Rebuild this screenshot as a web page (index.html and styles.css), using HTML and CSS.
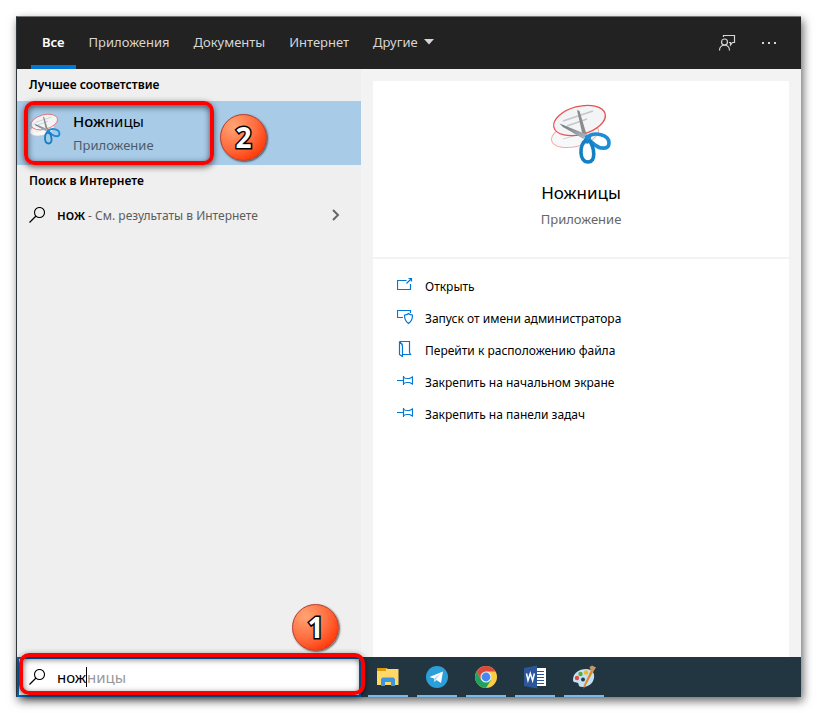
FILE: index.html
```
<!DOCTYPE html>
<html lang="ru">

	<head>
		<meta charset="UTF-8">
		<title>Поиск</title>
		<link rel="stylesheet" href="styles.css">
	</head>

	<body>
		<svg class="defs" width="0" height="0" aria-hidden="true">
			<defs>
				<linearGradient id="blade" x1="0" y1="0" x2="1" y2="1">
					<stop offset="0" stop-color="#6d7277"/>
					<stop offset="1" stop-color="#b4b9c4"/>
				</linearGradient>
			</defs>
			<symbol id="scissors" viewBox="0 0 62 62">
				<ellipse cx="25" cy="32" rx="24" ry="11.500" transform="rotate(-14 25 32)" fill="#f7f8fa" stroke="#f4a9a9"/>
				<path d="M13 36l14-4" stroke="#d3d3d3" stroke-width="1.200"/>
				<ellipse cx="29.500" cy="17.500" rx="26.500" ry="14" transform="rotate(-15 29.500 17.500)" fill="#f3f4f6" stroke="#ea5252" stroke-width="1.300"/>
				<path d="M13 18l30-10M17 23l20-7" stroke="#c4c6c8" stroke-width="1.500"/>
				<path d="M27 7l2.500 1L37 33l-4 1z" fill="#8b8b8b"/>
				<path d="M9.500 20.500L37 31.500 33.500 36 13 24z" fill="url(#blade)"/>
				<path d="M34 36l3-4h5l-2 5-2 4-4-2z" fill="#1786cc"/>
				<path d="M37 34C45 28 59 32 59 40c0 7-9 6-14 2-4-3-6-5-8-8z" fill="none" stroke="#1b8ed6" stroke-width="3.600"/>
				<path d="M36 37c-7 5-7 22 2 22 8 0 7-14 1-22" fill="none" stroke="#1480c4" stroke-width="3.600"/>
			</symbol>
			<symbol id="loupe" viewBox="0 0 16 16">
				<circle cx="10.500" cy="5.500" r="5" fill="none" stroke="currentColor" stroke-width="1.100"/>
				<path d="M7 9L.5 15.500" stroke="currentColor" stroke-width="1.200"/>
			</symbol>
			<symbol id="pin" viewBox="0 0 16 16">
				<path d="M0 7.500h6.500M6.500 3v9M6.500 4c1 1.500 2 1.500 3.500 1.500h2.500l3-1.500v7l-3-1.500H10c-1.500 0-2.500 0-3.500 1.500" fill="none" stroke="currentColor" stroke-width="1.200"/>
			</symbol>
		</svg>

		<div class="window">
			<header class="top">
				<nav class="tabs">
					<button class="tab active" type="button">Все</button>
					<button class="tab" type="button">Приложения</button>
					<button class="tab" type="button">Документы</button>
					<button class="tab" type="button">Интернет</button>
					<button class="tab" type="button">Другие
						<svg width="10" height="6" viewBox="0 0 10 6"><path d="M0 0h10L5 5.500z" fill="currentColor"/></svg>
					</button>
				</nav>
				<button class="tool" type="button" aria-label="Отзыв">
					<svg width="18" height="18" viewBox="0 0 18 18" fill="none" stroke="currentColor" stroke-width="1.200">
						<circle cx="6.500" cy="8" r="3"/>
						<path d="M1.500 16.500c0-7 10-7 10 0M5.500 3V1.500h11v7h-2l-2 2.500V8.500h-1.500"/>
					</svg>
				</button>
				<button class="tool" type="button" aria-label="Параметры">
					<svg width="18" height="18" viewBox="0 0 18 18" fill="currentColor"><path d="M2 8h2v2H2zM8 8h2v2H8zM14 8h2v2h-2z"/></svg>
				</button>
			</header>

			<main class="content">
				<section class="results">
					<h2>Лучшее соответствие</h2>
					<a class="best" href="#">
						<svg width="32" height="32"><use href="#scissors"/></svg>
						<span class="best-text">
							<span class="best-name"><b>Нож</b>ницы</span>
							<span class="kind">Приложение</span>
						</span>
						<span class="frame frame-best"></span>
						<span class="step step-two">2</span>
					</a>
					<h2>Поиск в Интернете</h2>
					<a class="web" href="#">
						<svg width="16" height="16"><use href="#loupe"/></svg>
						<span class="web-text"><b>нож</b> - См. результаты в Интернете</span>
						<svg width="8" height="12" viewBox="0 0 8 12"><path d="M1 1l5 5-5 5" fill="none" stroke="#666" stroke-width="2"/></svg>
					</a>
				</section>

				<section class="preview">
					<div class="card">
						<svg width="62" height="62"><use href="#scissors"/></svg>
						<h1>Ножницы</h1>
						<p>Приложение</p>
					</div>
					<ul class="actions">
						<li><a href="#">
							<svg width="16" height="16" viewBox="0 0 16 16"><path d="M9.500 3.500H.5v9h13V7M9.500 6.500l5-5M11.500 1.500h3v3" fill="none" stroke="currentColor" stroke-width="1.200"/></svg>
							Открыть</a></li>
						<li><a href="#">
							<svg width="16" height="16" viewBox="0 0 16 16"><path d="M6 8.500H.5v-7h13V4M11.500 4.500c1 1 2.500 1.500 4 1.500 0 4-1 6.500-4 8.500-3-2-4-4.500-4-8.500 1.500 0 3-.5 4-1.500z" fill="none" stroke="currentColor" stroke-width="1.200"/></svg>
							Запуск от имени администратора</a></li>
						<li><a href="#">
							<svg width="16" height="16" viewBox="0 0 16 16"><path d="M2.500.5h10v11l1 2h-8M2.500.5v13l3 2V5.500c0-2-1-3.500-3-5" fill="none" stroke="currentColor" stroke-width="1.200"/></svg>
							Перейти к расположению файла</a></li>
						<li><a href="#">
							<svg width="16" height="16"><use href="#pin"/></svg>
							Закрепить на начальном экране</a></li>
						<li><a href="#">
							<svg width="16" height="16"><use href="#pin"/></svg>
							Закрепить на панели задач</a></li>
					</ul>
				</section>
			</main>

			<footer class="taskbar">
				<div class="search">
					<label class="search-box">
						<svg width="16" height="16"><use href="#loupe"/></svg>
						<input type="text" value="нож" aria-label="Поиск">
						<span class="hint">ницы</span>
					</label>
					<span class="frame frame-search"></span>
					<span class="step step-one">1</span>
				</div>
				<div class="apps">
					<button class="app" type="button" aria-label="Проводник">
						<svg width="24" height="24" viewBox="0 0 24 24">
							<path d="M1 3h9l2 1h10.500v16H1z" fill="#ffd868"/>
							<path d="M1 3h9v3H1z" fill="#dd9b08"/>
							<path d="M5 21v-7l1.500-1.500h11L19 14v7h-4v-4H9v4z" fill="#3a96dd"/>
						</svg>
					</button>
					<button class="app" type="button" aria-label="Telegram">
						<svg width="24" height="24" viewBox="0 0 24 24">
							<circle cx="12" cy="12" r="11" fill="#2a9fda"/>
							<path d="M4.500 12L18 6.500l-2 11.500-4.500-3-2 2L9 13.500z" fill="#fff"/>
							<path d="M9 13.500l6.500-5-4.500 6-1.500 2.500z" fill="#b7d8ec"/>
						</svg>
					</button>
					<button class="app" type="button" aria-label="Chrome">
						<svg width="24" height="24" viewBox="0 0 24 24">
							<circle cx="12" cy="12" r="11" fill="#ffcd40"/>
							<path d="M2.500 6.500A11 11 0 0 1 21.500 6.500H12L7 14.500z" fill="#dc4a3d"/>
							<path d="M2.500 6.500A11 11 0 0 0 12 23l5-8-10-.5z" fill="#1da261"/>
							<circle cx="12" cy="12" r="5.500" fill="#f1f1f1"/>
							<circle cx="12" cy="12" r="4.400" fill="#4688f1"/>
						</svg>
					</button>
					<button class="app" type="button" aria-label="Word">
						<svg width="24" height="24" viewBox="0 0 24 24">
							<path d="M12 3h11v18H12z" fill="#fff"/>
							<path d="M14 6.500h7M14 9.500h7M14 12.500h7M14 15.500h7M14 18.500h7" stroke="#2b579a"/>
							<path d="M1 3l13-2.500v23L1 21z" fill="#2b579a"/>
							<path d="M3.500 8.500l1.500 7 2.300-7 2.300 7 1.800-7" fill="none" stroke="#fff" stroke-width="1.500"/>
						</svg>
					</button>
					<button class="app" type="button" aria-label="Paint">
						<svg width="24" height="24" viewBox="0 0 24 24">
							<path d="M1 15C1 8 7 4 14 4c6 0 9 4 8 9-1 6-6 9-12 9-4 0-3-3-4-4-2-1-5 0-5-3z" fill="#c3e1f4"/>
							<circle cx="5" cy="13" r="2.200" fill="#e04a43"/>
							<circle cx="8.500" cy="9" r="2.200" fill="#54a943"/>
							<circle cx="14" cy="7.500" r="2.200" fill="#f3b81d"/>
							<circle cx="11" cy="14.500" r="2" fill="#253a44"/>
							<path d="M19 5l2.500 1L14 20l-2.500 4L12 20z" fill="#e18a2c"/>
							<path d="M19 6l-1.500-4L20 .5l4 2-3 4.500z" fill="#c99661"/>
						</svg>
					</button>
				</div>
			</footer>
		</div>
	</body>

</html>
```

FILE: styles.css
```
* {
	box-sizing: border-box;
}

body {
	display: flex;
	min-height: 100vh;
	margin: 0;
	padding: 16px;
	background: #fff;
	color: #000;
	font: 13px/20px "Noto Sans", "Open Sans", sans-serif;
}

a {
	color: inherit;
	text-decoration: none;
}

b {
	font-weight: 500;
}

button {
	padding: 0;
	border: 0;
	background: none;
	color: inherit;
	font: inherit;
}

svg {
	flex: none;
	display: block;
}

.defs {
	position: absolute;
}

.window {
	flex: 1;
	display: flex;
	flex-direction: column;
	border-top: 1px solid #777;
	border-left: 1px solid #30373b;
	box-shadow: 2px 4px 9px rgba(0, 0, 0, 0.6);
}

.top {
	display: flex;
	align-items: center;
	gap: 24px;
	height: 52px;
	padding: 0 23px 0 14px;
	background: #222;
	color: #d6d6d6;
}

.tabs {
	flex: 1;
	display: flex;
	align-self: stretch;
	gap: 2px;
}

.tab {
	display: flex;
	align-items: center;
	gap: 6px;
	padding: 2px 11px 0;
	border-bottom: 4px solid transparent;
}

.tab.active {
	border-color: #0078d7;
	color: #fff;
	font-weight: 600;
}

.content {
	flex: 1;
	display: grid;
	grid-template-columns: 344fr 440fr;
}

.results {
	background: #efefef;
}

h2 {
	margin: 0;
	padding: 6px 12px;
	font-size: 12px;
	line-height: 20px;
	font-weight: 600;
}

.best {
	position: relative;
	display: flex;
	gap: 12px;
	height: 64px;
	padding: 12px;
	background: #a8cbe8;
}

.best-text {
	display: flex;
	flex-direction: column;
	gap: 4px;
	margin-top: -2px;
}

.best-name {
	font-size: 15px;
}

.kind {
	color: #4e5b66;
}

.frame {
	position: absolute;
	border: 4px solid #f00;
	border-radius: 10px;
	box-shadow: 0 2px 6px rgba(0, 0, 0, 0.6), inset 0 2px 6px rgba(0, 0, 0, 0.6);
}

.frame-best {
	top: 0;
	left: 7px;
	width: 190px;
	height: 64px;
}

.step {
	position: absolute;
	width: 47px;
	height: 47px;
	border: 1px solid #b43a28;
	border-radius: 50%;
	background: radial-gradient(circle at 28% 25%, #ffa575, #ff6a3c 50%, #ff3100 85%);
	box-shadow: 1px 1px 2px rgba(0, 0, 0, 0.6);
	color: #fff;
	font: bold 28px/45px "Open Sans", sans-serif;
	text-align: center;
	-webkit-text-stroke: 3px #000;
	stroke-linejoin: round;
	paint-order: stroke fill;
}

.step-two {
	top: 13px;
	left: 203px;
}

.step-one {
	bottom: 46px;
	left: 275px;
}

.web {
	display: flex;
	align-items: center;
	gap: 12px;
	height: 36px;
	padding: 0 21px 0 12px;
}

.web-text {
	flex: 1;
	color: #5c5c5c;
	font-size: 12px;
}

.web-text b {
	color: #000;
	font-size: 14px;
}

.preview {
	display: flex;
	flex-direction: column;
	gap: 2px;
	padding: 12px 12px 0;
	background: #f3f3f3;
}

.card {
	display: flex;
	flex-direction: column;
	align-items: center;
	height: 176px;
	padding-top: 22px;
	background: #fff;
}

h1 {
	margin: 16px 0 4px;
	font-size: 17px;
	line-height: 24px;
	font-weight: 400;
}

.card p {
	margin: 0;
	color: #666;
}

.actions {
	flex: 1;
	margin: 0;
	padding: 12px 24px;
	background: #fff;
	font-size: 12px;
	list-style: none;
}

.actions a {
	display: flex;
	align-items: center;
	gap: 12px;
	height: 32px;
}

.actions svg {
	margin-bottom: 4px;
	color: #0078d7;
}

.taskbar {
	display: grid;
	grid-template-columns: 344fr 440fr;
	height: 40px;
	background: #223642;
}

.search {
	position: relative;
}

.search-box {
	display: flex;
	align-items: center;
	height: 40px;
	padding-left: 10px;
	border: 2px solid #0067b8;
	background: #fff;
	font-size: 15px;
}

.search-box input {
	width: 30px;
	height: 20px;
	margin-left: 12px;
	padding: 0;
	border: 0;
	border-right: 1px solid #000;
	outline: 0;
	font: inherit;
}

.hint {
	color: #999;
}

.frame-search {
	top: -4px;
	left: 2px;
	right: -4px;
	height: 42px;
}

.apps {
	display: flex;
	gap: 9px;
	padding-left: 7px;
}

.app {
	display: flex;
	align-items: center;
	justify-content: center;
	width: 40px;
	padding-top: 2px;
	border-bottom: 2px solid #76b9ed;
}
```
